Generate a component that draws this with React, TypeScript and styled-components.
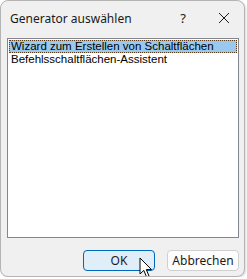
import { FC } from "react";
import styled, { createGlobalStyle } from "styled-components";

const GlobalStyle = createGlobalStyle`
  html, body {
    margin: 0;
    padding: 0;
    background: #ffffff;
  }
  body {
    font-family: "Noto Sans", "Open Sans", "Liberation Sans", sans-serif;
    -webkit-font-smoothing: antialiased;
  }
`;

const items = ["Wizard zum Erstellen von Schaltflächen", "Befehlsschaltflächen-Assistent"];

const Cursor: FC = () => (
  <StyledCursor width="14" height="22" viewBox="0 0 14 22">
    <path
      d="M1 1 L1 17 L4.8 13.4 L7.6 20 L10 19 L7.3 12.6 L12.5 12.6 Z"
      fill="#ffffff"
      stroke="#000000"
      strokeWidth="1"
      strokeLinejoin="round"
    />
  </StyledCursor>
);

const App: FC = () => {
  return (
    <>
      <GlobalStyle />
      <StyledWindow>
        <StyledTitleBar>
          <StyledTitle>Generator auswählen</StyledTitle>
          <StyledHelp>?</StyledHelp>
          <StyledClose>
            <svg width="12" height="12" viewBox="0 0 12 12">
              <path d="M1 1 L11 11 M11 1 L1 11" stroke="#1a1a1a" strokeWidth="1" />
            </svg>
          </StyledClose>
        </StyledTitleBar>
        <StyledList>
          {items.map((item, i) => (
            <StyledItem key={item} selected={i === 0}>
              {item}
            </StyledItem>
          ))}
        </StyledList>
        <StyledButtons>
          <StyledButton primary>
            OK
            <Cursor />
          </StyledButton>
          <StyledButton>Abbrechen</StyledButton>
        </StyledButtons>
      </StyledWindow>
    </>
  );
};

export default App;

const StyledWindow = styled.div`
  box-sizing: border-box;
  width: 245px;
  height: 277px;
  background: #f0f0f0;
  border: 1px solid #b4b4b4;
  border-radius: 8px;
  box-shadow: 1px 1px 2px rgba(0, 0, 0, 0.15);
  display: flex;
  flex-direction: column;
  overflow: hidden;
`;

const StyledTitleBar = styled.div`
  height: 36px;
  display: flex;
  align-items: center;
  padding: 0 0 0 9px;
  color: #1a1a1a;
  font-size: 12px;
`;

const StyledTitle = styled.div`
  flex: 1;
  margin-top: -2px;
`;

const StyledHelp = styled.div`
  width: 20px;
  text-align: center;
  font-size: 13px;
  margin-right: 22px;
  margin-top: -2px;
`;

const StyledClose = styled.div`
  width: 18px;
  display: flex;
  justify-content: center;
  margin-right: 11px;
  margin-top: -2px;
`;

const StyledList = styled.div`
  box-sizing: border-box;
  margin: 1px 5px 0 6px;
  height: 200px;
  background: #ffffff;
  border: 1px solid #828790;
  padding: 1px;
`;

const StyledItem = styled.div<{ selected?: boolean }>`
  box-sizing: border-box;
  height: 13px;
  line-height: 13px;
  font-family: "Liberation Sans", "Noto Sans", sans-serif;
  font-size: 11.5px;
  padding-left: 2px;
  color: #000000;
  white-space: nowrap;
  background: ${(p) => (p.selected ? "#99c9ef" : "transparent")};
  outline: ${(p) => (p.selected ? "1px dotted #5a3a1a" : "none")};
  outline-offset: -1px;
`;

const StyledButtons = styled.div`
  display: flex;
  justify-content: flex-end;
  gap: 12px;
  padding: 12px 5px 0 0;
`;

const StyledButton = styled.div<{ primary?: boolean }>`
  position: relative;
  box-sizing: border-box;
  width: 72px;
  height: 21px;
  display: flex;
  align-items: center;
  justify-content: center;
  font-size: 12px;
  color: #1a1a1a;
  border-radius: 4px;
  background: ${(p) => (p.primary ? "#e0eef9" : "#fdfdfd")};
  border: 1px solid ${(p) => (p.primary ? "#0067c0" : "#d0d0d0")};
`;

const StyledCursor = styled.svg`
  position: absolute;
  left: 55px;
  top: 6px;
`;
